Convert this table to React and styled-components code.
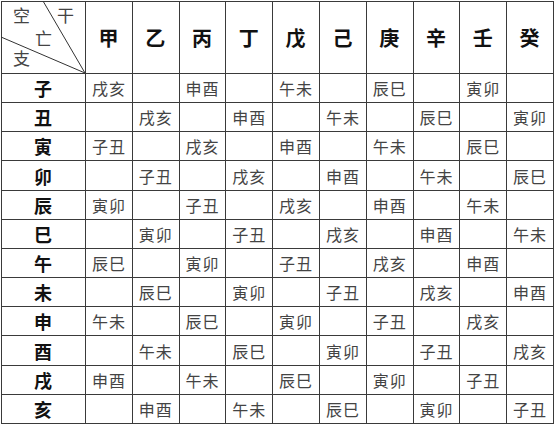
import React from 'react';
import styled, { createGlobalStyle } from 'styled-components';

const GlobalStyle = createGlobalStyle`
  html, body {
    margin: 0;
    padding: 0;
    background: #fff;
  }
  body {
    font-family: "Noto Sans CJK SC", "Noto Sans", sans-serif;
  }
`;

const Grid = styled.div`
  box-sizing: border-box;
  margin: 1px 0 0 1px;
  width: 553px;
  height: 423px;
  padding: 1px;
  display: grid;
  grid-template-columns: 83px repeat(10, 1fr);
  grid-template-rows: 71px repeat(12, 1fr);
  gap: 1px;
  background: #3a3a3a;
`;

const Cell = styled.div`
  background: #fff;
  display: flex;
  align-items: center;
  justify-content: center;
  font-size: ${p => (p.$head ? '20px' : p.$side ? '18px' : '16px')};
  font-weight: ${p => (p.$head || p.$side ? 700 : 400)};
  color: ${p => (p.$head || p.$side ? '#111' : '#444')};
  letter-spacing: 1px;
  line-height: 1;
`;

const Corner = styled.div`
  position: relative;
  box-sizing: border-box;
  background: #fff;
  padding: 4px 0 0 11px;
  display: grid;
  grid-template-rows: 23px 20px 17px;
  font-size: 17px;
  line-height: 1;
  color: #444;
`;

const CornerRow = styled.div`
  display: flex;
  gap: 27px;
  padding-left: ${p => p.$indent || 0}px;
`;

// the two diagonal rules of the corner cell
const Lines = styled.svg`
  position: absolute;
  left: 0;
  top: 0;
  overflow: visible;
`;

const stems = ['甲', '乙', '丙', '丁', '戊', '己', '庚', '辛', '壬', '癸'];
const branches = ['子', '丑', '寅', '卯', '辰', '巳', '午', '未', '申', '酉', '戌', '亥'];

// void pair of the xun that stem s + branch b belongs to
function voidPair(s, b) {
  if ((s + b) % 2 !== 0) return '';
  const start = (b - s + 12) % 12;
  return branches[(start + 10) % 12] + branches[(start + 11) % 12];
}

export default function App() {
  return (
    <>
      <GlobalStyle />
      <Grid>
        <Corner>
          <Lines width="83" height="71">
            <line x1="41" y1="-1" x2="83" y2="71" stroke="#333" strokeWidth="1" />
            <line x1="-1" y1="35" x2="83" y2="71" stroke="#333" strokeWidth="1" />
          </Lines>
          <CornerRow>
            <span>空</span>
            <span>干</span>
          </CornerRow>
          <CornerRow $indent={22}>
            <span>亡</span>
          </CornerRow>
          <CornerRow>
            <span>支</span>
          </CornerRow>
        </Corner>
        {stems.map(s => (
          <Cell key={s} $head>{s}</Cell>
        ))}
        {branches.map((b, bi) => (
          <React.Fragment key={b}>
            <Cell $side>{b}</Cell>
            {stems.map((s, si) => (
              <Cell key={s}>{voidPair(si, bi)}</Cell>
            ))}
          </React.Fragment>
        ))}
      </Grid>
    </>
  );
}
